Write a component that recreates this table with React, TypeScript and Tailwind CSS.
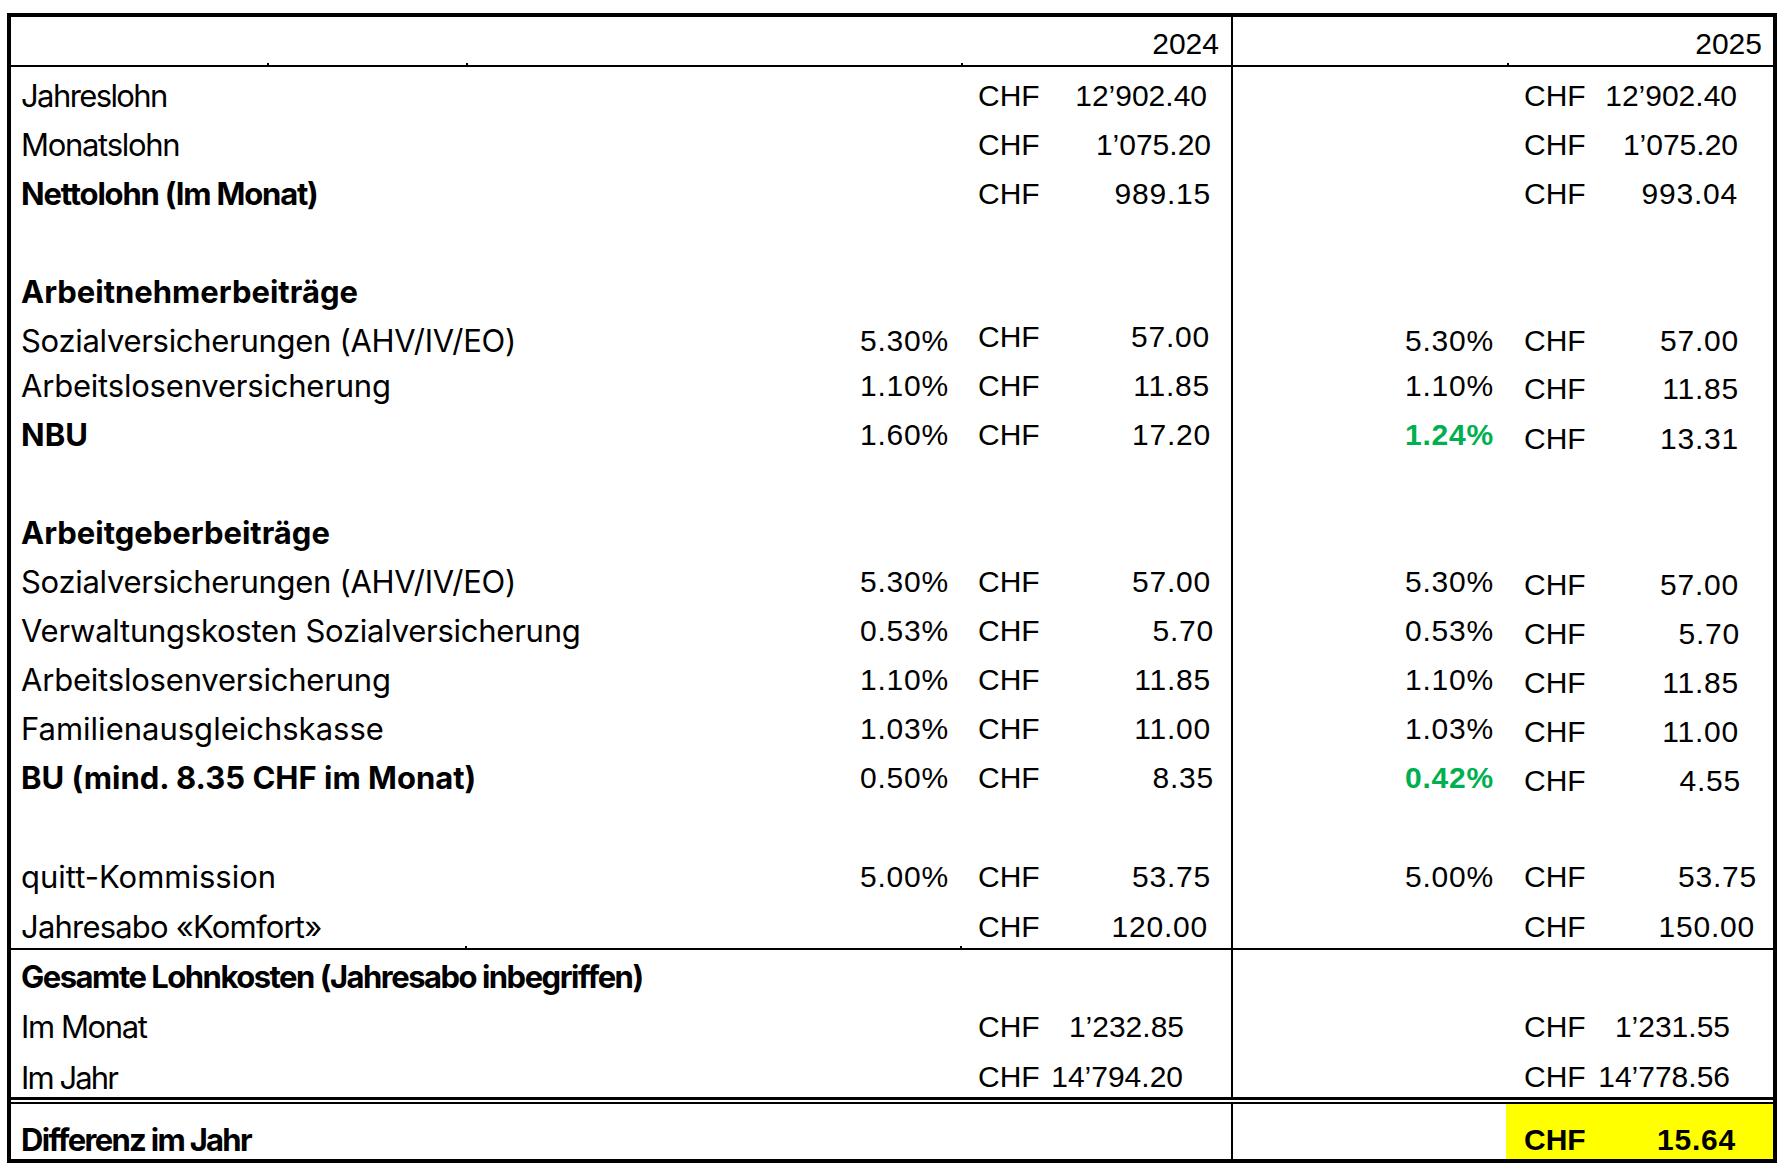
type Row = {
  h: string;
  pad?: string;
  label?: string;
  lcls?: string;
  bold?: boolean;
  p1?: string;
  a1?: string;
  a1pr?: string;
  t1?: string;
  p2?: string;
  green?: boolean;
  a2?: string;
  a2pr?: string;
  t2?: string;
  total?: boolean;
};

const label = "font-['Inter',sans-serif] text-[31px] leading-none whitespace-nowrap";
const num = "font-['Liberation_Sans',Arial,sans-serif] text-[30px] leading-none whitespace-nowrap";

const top: Row[] = [
  { h: "h-[53px]", pad: "pt-[4px]", label: "Jahreslohn", lcls: "tracking-[-1.6px]", a1: "12’902.40", a1pr: "pr-[24px]", a2: "12’902.40", a2pr: "pr-[36px]" },
  { h: "h-[49px]", label: "Monatslohn", lcls: "tracking-[-1.3px]", a1: "1’075.20", a1pr: "pr-[20px]", a2: "1’075.20", a2pr: "pr-[35px]" },
  { h: "h-[49px]", label: "Nettolohn (Im Monat)", lcls: "tracking-[-1.2px]", bold: true, a1: "989.15", a1pr: "pr-[20px]", a2: "993.04", a2pr: "pr-[35px]" },
  { h: "h-[49px]" },
  { h: "h-[49px]", label: "Arbeitnehmerbeiträge", bold: true },
  { h: "h-[49px]", label: "Sozialversicherungen (AHV/IV/EO)", lcls: "tracking-[-0.3px]", p1: "5.30%", a1: "57.00", a1pr: "pr-[21px]", t1: "-translate-y-[4px]", p2: "5.30%", a2: "57.00", a2pr: "pr-[34px]" },
  { h: "h-[45px]", pad: "pb-[4px]", label: "Arbeitslosenversicherung", lcls: "tracking-[-0.2px]", p1: "1.10%", a1: "11.85", a1pr: "pr-[21px]", p2: "1.10%", a2: "11.85", a2pr: "pr-[34px]", t2: "translate-y-[3px]" },
  { h: "h-[49px]", label: "NBU", bold: true, p1: "1.60%", a1: "17.20", a1pr: "pr-[20px]", p2: "1.24%", green: true, a2: "13.31", a2pr: "pr-[34px]", t2: "translate-y-[4px]" },
  { h: "h-[49px]" },
  { h: "h-[49px]", label: "Arbeitgeberbeiträge", bold: true },
  { h: "h-[49px]", label: "Sozialversicherungen (AHV/IV/EO)", lcls: "tracking-[-0.3px]", p1: "5.30%", a1: "57.00", a1pr: "pr-[20px]", p2: "5.30%", a2: "57.00", a2pr: "pr-[34px]", t2: "translate-y-[3px]" },
  { h: "h-[49px]", label: "Verwaltungskosten Sozialversicherung", lcls: "tracking-[-0.25px]", p1: "0.53%", a1: "5.70", a1pr: "pr-[17px]", p2: "0.53%", a2: "5.70", a2pr: "pr-[33px]", t2: "translate-y-[3px]" },
  { h: "h-[49px]", label: "Arbeitslosenversicherung", lcls: "tracking-[-0.2px]", p1: "1.10%", a1: "11.85", a1pr: "pr-[20px]", p2: "1.10%", a2: "11.85", a2pr: "pr-[34px]", t2: "translate-y-[3px]" },
  { h: "h-[49px]", label: "Familienausgleichskasse", p1: "1.03%", a1: "11.00", a1pr: "pr-[20px]", p2: "1.03%", a2: "11.00", a2pr: "pr-[34px]", t2: "translate-y-[3px]" },
  { h: "h-[49px]", label: "BU (mind. 8.35 CHF im Monat)", bold: true, p1: "0.50%", a1: "8.35", a1pr: "pr-[17px]", p2: "0.42%", green: true, a2: "4.55", a2pr: "pr-[32px]", t2: "translate-y-[3px]" },
  { h: "h-[50px]" },
  { h: "h-[49px]", label: "quitt-Kommission", p1: "5.00%", a1: "53.75", a1pr: "pr-[20px]", p2: "5.00%", a2: "53.75", a2pr: "pr-[16px]" },
  { h: "h-[47px]", pad: "pt-[4px]", label: "Jahresabo «Komfort»", lcls: "tracking-[-0.8px]", a1: "120.00", a1pr: "pr-[23px]", a2: "150.00", a2pr: "pr-[18px]" },
];

const totals: Row[] = [
  { h: "h-[52px]", label: "Gesamte Lohnkosten (Jahresabo inbegriffen)", lcls: "tracking-[-1.5px]", bold: true },
  { h: "h-[49px]", label: "Im Monat", lcls: "tracking-[-1.4px]", a1: "1’232.85", a1pr: "pr-[47px]", a2: "1’231.55", a2pr: "pr-[43px]" },
  { h: "h-[46px]", pad: "pt-[6px]", label: "Im Jahr", lcls: "tracking-[-1.9px]", a1: "14’794.20", a1pr: "pr-[48px]", a2: "14’778.56", a2pr: "pr-[43px]" },
];

const diff: Row = {
  h: "h-[55px]",
  pad: "pt-[16px]",
  label: "Differenz im Jahr",
  lcls: "tracking-[-1.7px]",
  bold: true,
  a2: "15.64",
  a2pr: "pr-[37px]",
  total: true,
};

// short amounts sit a touch wider in the sheet than the ones with a thousands mark
const track = (v?: string) => (v && !v.includes("’") ? "tracking-[0.8px]" : "");

function TableRow({ r }: { r: Row }) {
  const pad = r.pad ?? "";
  const hl = r.total ? "bg-[#ffff00] font-bold" : "";
  return (
    <div className={`flex text-black ${r.h}`}>
      <div className={`flex w-[850px] items-center pl-[10px] ${pad}`}>
        <span className={`${label} ${r.lcls ?? ""} ${r.bold ? "font-bold" : "font-normal"}`}>{r.label}</span>
      </div>
      <div className={`flex w-[92px] items-center justify-end pr-[4px] tracking-[0.8px] ${pad} ${num}`}>{r.p1}</div>
      <div className={`flex w-[97px] items-center pl-[25px] ${pad} ${num} ${r.t1 ?? ""}`}>{r.a1 ? "CHF" : ""}</div>
      <div className={`flex w-[181px] items-center justify-end ${track(r.a1)} ${r.a1pr ?? ""} ${pad} ${num} ${r.t1 ?? ""}`}>
        {r.a1}
      </div>
      <div className={`flex w-[275px] items-center justify-end border-l-2 border-black pr-[12px] tracking-[0.8px] ${pad} ${num}`}>
        <span className={r.green ? "font-bold text-[#00b050]" : ""}>{r.p2}</span>
      </div>
      <div className={`flex w-[84px] items-center pl-[18px] ${pad} ${num} ${hl}`}>
        <span className={r.t2 ?? ""}>{r.a2 ? "CHF" : ""}</span>
      </div>
      <div className={`flex w-[183px] items-center justify-end ${track(r.a2)} ${r.a2pr ?? ""} ${pad} ${num} ${hl}`}>
        <span className={r.t2 ?? ""}>{r.a2}</span>
      </div>
    </div>
  );
}

// small cell-corner specks that Excel leaves on the rules
function Rule({ dots }: { dots: string[] }) {
  return (
    <div className="relative h-[2px] bg-black">
      {dots.map((d) => (
        <span key={d} className={`absolute -top-[2px] h-[2px] w-[2px] bg-black ${d}`} />
      ))}
    </div>
  );
}

export default function App() {
  return (
    <div className="min-h-screen bg-white pl-[7px] pt-[13px]">
      <div className="w-[1770px] border-4 border-black text-black">
        <div className="flex h-[48px]">
          <div className={`flex w-[1220px] items-center justify-end pr-[12px] pt-[6px] ${num}`}>2024</div>
          <div className={`flex w-[542px] items-center justify-end border-l-2 border-black pr-[11px] pt-[6px] ${num}`}>
            2025
          </div>
        </div>
        <Rule dots={["left-[256px]", "left-[455px]", "left-[950px]", "left-[1496px]"]} />

        {top.map((r, i) => (
          <TableRow key={i} r={r} />
        ))}
        <Rule dots={["left-[454px]", "left-[949px]"]} />

        {totals.map((r, i) => (
          <TableRow key={i} r={r} />
        ))}
        <div className="h-[7px] border-t-[3px] border-b-2 border-black" />

        <TableRow r={diff} />
      </div>
    </div>
  );
}
